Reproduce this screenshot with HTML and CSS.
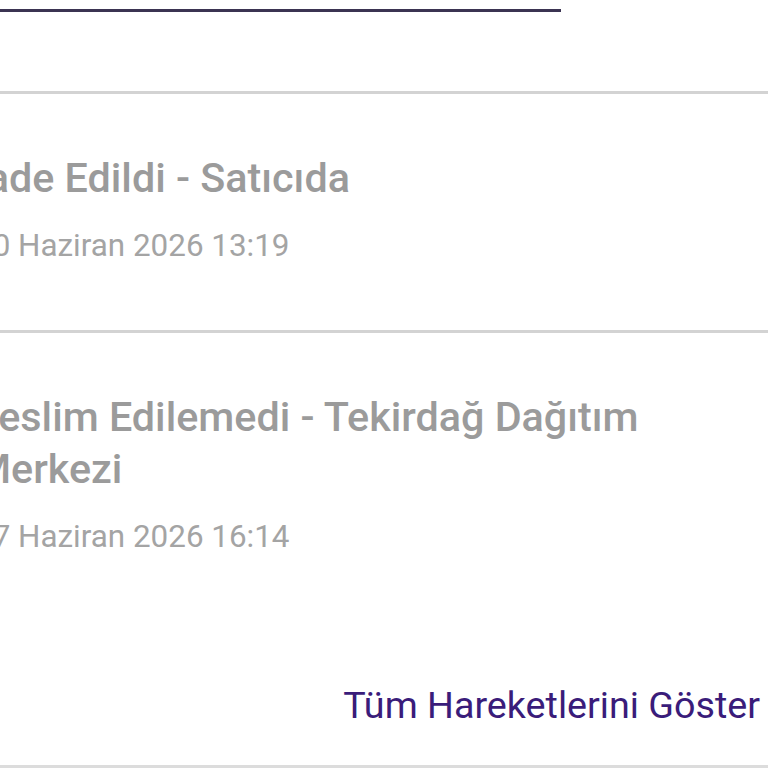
FILE: index.html
```html
<!DOCTYPE html>
<html lang="tr">
<head>
    <meta charset="UTF-8">
    <meta name="viewport" content="width=device-width, initial-scale=1.0">
    <title>Kargo Hareketleri</title>
    <link rel="stylesheet" href="styles.css">
</head>
<body>
    <div class="tab-indicator"></div>

    <div class="events">
        <div class="event">
            <div class="event-body">
                <div class="event-title">İade Edildi - Satıcıda</div>
                <div class="event-date">20 Haziran 2026 13:19</div>
            </div>
        </div>
        <div class="event">
            <div class="event-body">
                <div class="event-title">Teslim Edilemedi - Tekirdağ Dağıtım Merkezi</div>
                <div class="event-date">27 Haziran 2026 16:14</div>
            </div>
        </div>
    </div>

    <div class="events-footer">
        <a href="#" class="show-all">Tüm Hareketlerini Göster</a>
    </div>
</body>
</html>
```

FILE: styles.css
```css
body { margin: 0; background: #fff; font-family: Roboto, "Liberation Sans", sans-serif; overflow: hidden; }

/* active tab underline, cut off at the top of the screen */
.tab-indicator { width: 561px; height: 3px; margin-top: 9px; background: #3b3452; }

.events { margin-top: 79px; }
.event { border-top: 3px solid #d3d3d3; padding: 58px 8px 64px 0; }
.event-body { margin-left: -25px; display: flex; flex-direction: column; gap: 22px; }
.event-title { font-size: 41.3px; font-weight: 500; line-height: 52px; color: #9b9b9b; max-width: 700px; }
.event-date { font-size: 31.4px; line-height: 40px; color: #a4a4a4; }

.events-footer { display: flex; justify-content: flex-end; padding: 62px 8px 38px 0; border-bottom: 3px solid #dcdcdc; }
.show-all { font-size: 37.7px; line-height: 44px; color: #3a1c7a; text-decoration: none; }
```
